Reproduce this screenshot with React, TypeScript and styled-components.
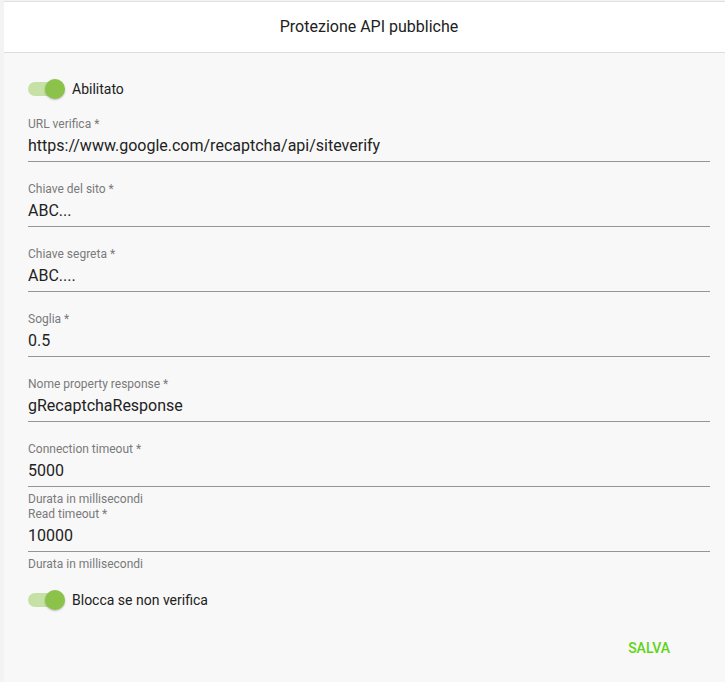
import { FC } from "react";
import styled, { createGlobalStyle } from "styled-components";

type FieldProps = {
  label: string;
  value: string;
  hint?: string;
};

const fields: FieldProps[] = [
  { label: "URL verifica *", value: "https://www.google.com/recaptcha/api/siteverify" },
  { label: "Chiave del sito *", value: "ABC..." },
  { label: "Chiave segreta *", value: "ABC...." },
  { label: "Soglia *", value: "0.5" },
  { label: "Nome property response *", value: "gRecaptchaResponse" },
  { label: "Connection timeout *", value: "5000", hint: "Durata in millisecondi" },
  { label: "Read timeout *", value: "10000", hint: "Durata in millisecondi" },
];

const Field: FC<FieldProps> = ({ label, value, hint }) => (
  <FieldBox>
    <Label>{label}</Label>
    <Value>{value}</Value>
    <Subscript>{hint && <Hint>{hint}</Hint>}</Subscript>
  </FieldBox>
);

const Toggle: FC<{ label: string; top: number }> = ({ label, top }) => (
  <ToggleRow top={top}>
    <Track>
      <Thumb />
    </Track>
    <ToggleLabel>{label}</ToggleLabel>
  </ToggleRow>
);

const App: FC = () => {
  return (
    <Page>
      <GlobalStyle />
      <Card>
        <Header>Protezione API pubbliche</Header>
        <Body>
          <Toggle label="Abilitato" top={26} />
          <Fields>
            {fields.map((f) => (
              <Field key={f.label} {...f} />
            ))}
          </Fields>
          <Toggle label="Blocca se non verifica" top={18} />
          <Actions>
            <SaveButton>SALVA</SaveButton>
          </Actions>
        </Body>
      </Card>
    </Page>
  );
};

export default App;

const GlobalStyle = createGlobalStyle`
  html, body {
    margin: 0;
    padding: 0;
    overflow: hidden;
    background: #f3f3f3;
    font-family: Roboto, "Liberation Sans", Arial, sans-serif;
  }
`;

const Page = styled.div`
  width: 740px;
  height: 682px;
  padding-left: 4px;
  padding-top: 1px;
  box-sizing: border-box;
  background: #f3f3f3;
`;

const Card = styled.div`
  width: 730px;
  height: 681px;
  background: #f8f8f8;
  border-top: 1px solid #e0e0e0;
  display: flex;
  flex-direction: column;
`;

const Header = styled.div`
  height: 48px;
  padding-bottom: 2px;
  background: #ffffff;
  border-bottom: 1px solid #dedede;
  display: flex;
  align-items: center;
  justify-content: center;
  font-size: 16px;
  color: #212121;
`;

const Body = styled.div`
  padding: 0 24px;
  display: flex;
  flex-direction: column;
`;

const ToggleRow = styled.div<{ top: number }>`
  display: flex;
  align-items: center;
  height: 20px;
  margin-top: ${(p) => p.top}px;
`;

const Track = styled.div`
  position: relative;
  width: 34px;
  height: 14px;
  border-radius: 7px;
  background: #c5e1a5;
`;

const Thumb = styled.div`
  position: absolute;
  top: -3px;
  right: -3px;
  width: 20px;
  height: 20px;
  border-radius: 50%;
  background: #8bc34a;
  box-shadow: 0 1px 2px rgba(0, 0, 0, 0.25);
`;

const ToggleLabel = styled.span`
  margin-left: 10px;
  font-size: 14px;
  color: #212121;
`;

const Fields = styled.div`
  margin-top: 18px;
  display: flex;
  flex-direction: column;
`;

const FieldBox = styled.div`
  height: 65px;
  display: flex;
  flex-direction: column;
`;

const Label = styled.div`
  font-size: 12px;
  line-height: 14px;
  color: #7a7a7a;
`;

const Value = styled.div`
  font-size: 16px;
  line-height: 20px;
  padding: 5px 0 5px;
  color: #222222;
  border-bottom: 1px solid #959595;
`;

const Subscript = styled.div`
  height: 20px;
`;

const Hint = styled.div`
  margin-top: 5px;
  font-size: 12px;
  line-height: 14px;
  color: #7a7a7a;
`;

const Actions = styled.div`
  display: flex;
  justify-content: flex-end;
  margin-top: 20px;
  padding-right: 24px;
`;

const SaveButton = styled.button`
  min-width: 64px;
  height: 36px;
  padding: 0 16px;
  border: none;
  background: transparent;
  font-family: Roboto, "Liberation Sans", Arial, sans-serif;
  font-size: 14px;
  font-weight: 500;
  color: #5fd314;
  cursor: pointer;
`;
